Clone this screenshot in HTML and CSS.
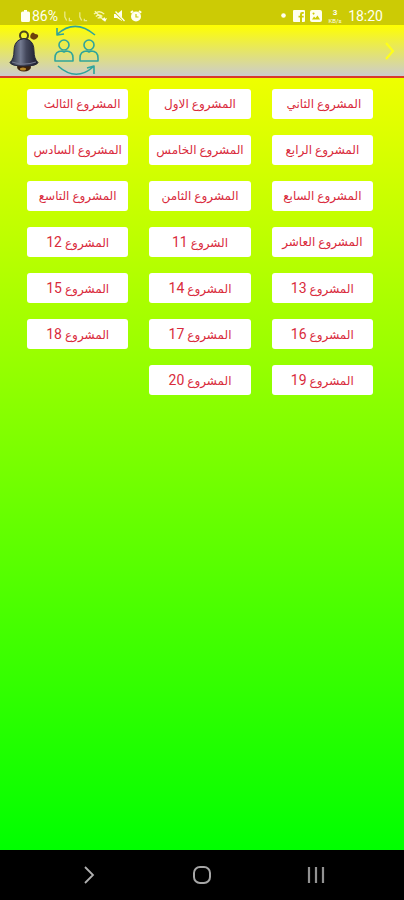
FILE: index.html
```
<!DOCTYPE html>
<html lang="ar" dir="rtl">
<head>
<meta charset="utf-8">
<meta name="viewport" content="width=device-width, initial-scale=1">
<title>المشاريع</title>
<link rel="stylesheet" href="styles.css">
</head>
<body>
<div class="status">
  <div class="status-group">
    <span class="clock">18:20</span>
    <span class="speed"><b>3</b><span>KB/s</span></span>
    <svg width="12" height="12" viewBox="0 0 12 12"><path fill="#fffff0" fill-rule="evenodd" d="M2 0h8a2 2 0 0 1 2 2v8a2 2 0 0 1-2 2H2a2 2 0 0 1-2-2V2a2 2 0 0 1 2-2zM2 9.500h8L7.500 5.500 5.500 8 4 6.500zM3.500 2.500a1 1 0 1 0 .1 0z"/></svg>
    <svg width="12" height="12" viewBox="0 0 12 12"><path fill="#fffff0" d="M1 0h10a1 1 0 0 1 1 1v10a1 1 0 0 1-1 1H9V7.500h1.700V5.800H9V4.500q0-.8.800-.8h1V2H9.200Q7 2 7 4.200v1.600H5.500v1.700H7V12H1a1 1 0 0 1-1-1V1a1 1 0 0 1 1-1z"/></svg>
    <svg class="dot" width="5" height="5" viewBox="0 0 5 5"><circle cx="2.500" cy="2.500" r="2.300" fill="#fffff0"/></svg>
  </div>
  <div class="status-group status-left">
    <svg width="12" height="12" viewBox="0 0 12 12"><circle cx="6" cy="6.500" r="5" fill="#fffff0"/><path d="M.8 2.800 3 1M11.200 2.800 9 1" stroke="#fffff0" stroke-width="2"/><path d="M6 4v3h2.500" fill="none" stroke="#cccb05" stroke-width="1.200"/></svg>
    <svg width="12" height="12" viewBox="0 0 12 12"><path fill="#fffff0" d="M1 4h3l5-4v11L4 8H1z"/><path d="M1 1l10 10" stroke="#cccb05" stroke-width="2"/><path d="M2.500 1.500 11.500 11" stroke="#fffff0" stroke-width="1.300"/></svg>
    <svg width="15" height="12" viewBox="0 0 16 12"><g fill="none" stroke="#f8f8b0" stroke-width="1.400"><path d="M1 4q5.500-5 11 0M3 6.500q3.500-3.200 7 0M5 8.500q1.500-1.500 3 0M2 1l9 9"/></g><path fill="#fffff0" d="M10 10l2-3 1 2 2-1-2 4z"/></svg>
    <svg width="10" height="12" viewBox="0 0 11 12"><path d="M2 2v5l2 4M7 9v2h3" fill="none" stroke="#ebeb88" stroke-width="1.400"/></svg>
    <svg width="10" height="12" viewBox="0 0 11 12"><path d="M2 1v6l2 4M7 8v3h3" fill="none" stroke="#ebeb88" stroke-width="1.400"/></svg>
    <span class="battery">86%</span>
    <svg width="9" height="12" viewBox="0 0 9 12"><path fill="#fffff0" d="M3 0h3v1.500h1.500Q9 1.500 9 3v7.500Q9 12 7.500 12h-6Q0 12 0 10.500V3q0-1.500 1.500-1.500H3z"/></svg>
  </div>
</div>
<div class="app">
  <header class="bar">
    <button class="icon-button" aria-label="رجوع"><svg width="12" height="20" viewBox="0 0 12 20"><path d="M2 2l7 8-7 8" fill="none" stroke="#ffff19" stroke-width="2.200"/></svg></button>
    <div class="tools">
      <button class="icon-button" aria-label="تبديل المستخدم">
        <svg width="48" height="52" viewBox="0 0 48 52"><g fill="none" stroke="#2fa49b" stroke-width="1.600" stroke-linejoin="round"><path d="M4 9.500Q22-7 42 10M4 3v7l7-1M5 41q18 16 35 1M34 43l7-2v8"/><circle cx="11" cy="20" r="5"/><circle cx="36" cy="20" r="5"/><path d="M2 36v-3q0-7 7-7l2 1 2-1q7 0 7 7v3zM27 36v-3q0-7 7-7l2 1 2-1q7 0 7 7v3z"/></g></svg>
      </button>
      <button class="icon-button" aria-label="الإشعارات">
        <svg width="32" height="42" viewBox="0 0 32 42">
          <defs><linearGradient id="metal"><stop offset="0" stop-color="#202434"/><stop offset=".38" stop-color="#747b91"/><stop offset=".58" stop-color="#44485c"/><stop offset="1" stop-color="#171927"/></linearGradient></defs>
          <circle cx="15" cy="5.500" r="4" fill="none" stroke="#4a451d" stroke-width="2"/>
          <ellipse cx="15" cy="37" rx="7" ry="4.500" fill="#3d220c"/><ellipse cx="14" cy="39" rx="3" ry="1.500" fill="#b88a28"/>
          <path fill="url(#metal)" stroke="#242737" d="M10 10q5-3 10 0 5 3 5 11 0 8 4 11.500Q28 36 15 36T1 32.500Q5 29 5 21q0-8 5-11z"/>
          <path d="M3 32q12 4 24 0" fill="none" stroke="#73788c" stroke-width="1.200"/>
          <path fill="#6e410c" d="M22 4q2-3 4 0 4 0 3 3-3 4-6 2-3-1-1-5z"/>
        </svg>
      </button>
    </div>
  </header>
  <main class="grid">
    <button class="project">المشروع الثاني&nbsp;</button>
    <button class="project">المشروع الاول</button>
    <button class="project">المشروع الثالث&nbsp;&nbsp;&nbsp;</button>
    <button class="project">المشروع الرابع</button>
    <button class="project">المشروع الخامس</button>
    <button class="project">المشروع السادس</button>
    <button class="project">المشروع السابع</button>
    <button class="project">المشروع الثامن</button>
    <button class="project">المشروع التاسع</button>
    <button class="project">المشروع العاشر</button>
    <button class="project">الشروع <span class="num">11</span></button>
    <button class="project">المشروع <span class="num">12</span></button>
    <button class="project">المشروع <span class="num">13</span></button>
    <button class="project">المشروع <span class="num">14</span></button>
    <button class="project">المشروع <span class="num">15</span></button>
    <button class="project">المشروع <span class="num">16</span></button>
    <button class="project">المشروع <span class="num">17</span></button>
    <button class="project">المشروع <span class="num">18</span></button>
    <button class="project">المشروع <span class="num">19</span></button>
    <button class="project">المشروع <span class="num">20</span></button>
  </main>
</div>
<nav class="nav">
  <button class="icon-button" aria-label="التطبيقات الأخيرة"><svg width="18" height="18" viewBox="0 0 18 18"><path d="M2 1v16M9 1v16M16 1v16" stroke="#929292" stroke-width="2.200"/></svg></button>
  <button class="icon-button" aria-label="الرئيسية"><svg width="20" height="20" viewBox="0 0 20 20"><rect x="2" y="2" width="16" height="16" rx="6" fill="none" stroke="#a6a6a6" stroke-width="2"/></svg></button>
  <button class="icon-button" aria-label="رجوع"><svg width="14" height="20" viewBox="0 0 14 20"><path d="M2 2l8 8-8 8" fill="none" stroke="#b0b0b0" stroke-width="1.800"/></svg></button>
</nav>
</body>
</html>
```
FILE: styles.css
```
* {
  box-sizing: border-box;
}

body {
  margin: 0;
  min-height: 100vh;
  display: flex;
  flex-direction: column;
  font-family: Roboto, "DejaVu Sans", sans-serif;
}

button {
  border: 0;
  padding: 0;
  font: inherit;
}

svg {
  display: block;
  flex: none;
}

.status {
  display: flex;
  justify-content: space-between;
  align-items: center;
  height: 25px;
  padding: 6px 21px 0;
  background: #cccb05;
  color: #fffff0;
  font-size: 14px;
  line-height: 18px;
}

.status-group {
  display: flex;
  align-items: center;
  gap: 5px;
}

.battery {
  direction: ltr;
  margin-left: -3px;
}

.speed {
  display: flex;
  flex-direction: column;
  align-items: center;
  width: 16px;
  font-size: 8px;
  line-height: 9px;
}

.speed span {
  font-size: 6px;
  line-height: 7px;
}

.dot {
  margin-right: 2px;
}

.app {
  flex: 1;
  background: linear-gradient(#ffff00, #00ff00);
}

.bar {
  display: flex;
  justify-content: space-between;
  align-items: center;
  height: 53px;
  padding: 0 8px 0 9px;
  border-bottom: 2px solid #d93a2b;
  background: linear-gradient(#ffff00, #cccccc);
}

.tools {
  display: flex;
  align-items: center;
  gap: 12px;
}

.icon-button {
  background: none;
}

.grid {
  display: grid;
  grid-template-columns: repeat(3, 1fr);
  grid-auto-rows: 30px;
  gap: 16px 21px;
  padding: 11px 31px 16px 27px;
}

.project {
  border-radius: 3px;
  background: #ffffff;
  color: #d92b3c;
  font-size: 12px;
  line-height: 18px;
  white-space: nowrap;
}

.num {
  font-size: 14px;
}

.nav {
  display: flex;
  justify-content: space-between;
  align-items: center;
  height: 50px;
  padding: 0 79px 0 83px;
  background: #000000;
}
```
